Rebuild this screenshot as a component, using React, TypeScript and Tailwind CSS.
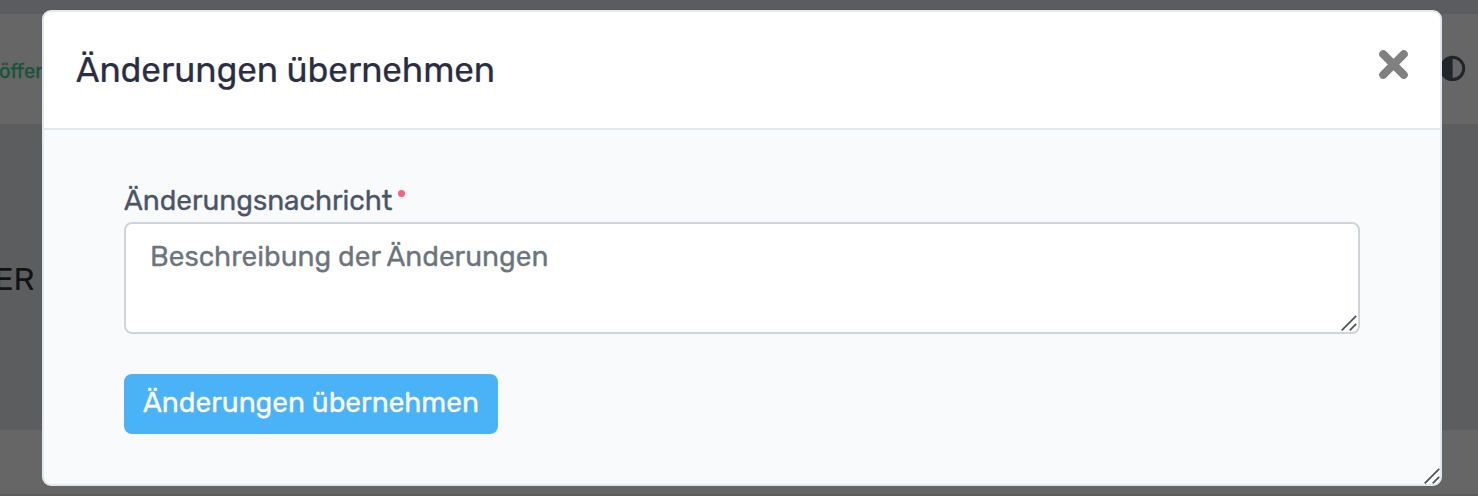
function ResizeGrip({ className }: { className: string }) {
  return (
    <svg className={className} width="16" height="16" viewBox="0 0 16 16" fill="none" stroke="#505050" strokeWidth="1.7">
      <path d="M0.7 15.3 15.2 0.8M8.7 15.3 15.2 8.8" />
    </svg>
  );
}

function Backdrop() {
  return (
    <div className="flex h-full flex-col">
      <div className="h-[14px] bg-[#5b5c60]" />
      <div className="flex h-[110px] justify-between bg-[#666666]">
        <div className="-ml-[1px] pt-[42px] text-[20px] leading-[30px] text-[#16543a] [-webkit-text-stroke:0.3px]">öffen</div>
        <svg className="mt-[41px] mr-[12px]" width="27" height="27" viewBox="0 0 27 27">
          <circle cx="13.5" cy="13.4" r="11.2" fill="none" stroke="#20252c" strokeWidth="3" />
          <path d="M13.6 2a11.4 11.4 0 0 0 0 22.8Z" fill="#20252c" />
        </svg>
      </div>
      <div className="h-[306px] bg-[#5c5d5f] pt-[132px]">
        <div className="-ml-[6px] text-[32px] leading-[46px] text-[#111214]">ER</div>
      </div>
      <div className="h-[64px] bg-[#666666]" />
      <div className="h-[2px] bg-[#5c5c5e]" />
    </div>
  );
}

export default function App() {
  return (
    <div className="relative h-[496px] w-[1478px] overflow-hidden font-['Rubik','Roboto',sans-serif]">
      <Backdrop />
      <div className="absolute top-[10px] left-[42px] flex h-[476px] w-[1400px] flex-col overflow-hidden rounded-[9px] border-2 border-[#e2e8f0] bg-[#f9fafc]">
        <header className="flex h-[118px] shrink-0 items-start justify-between border-b-2 border-[#e2e8f0] bg-white pr-[31px] pl-[32px]">
          <h1 className="pt-[34px] text-[35px] leading-[48px] tracking-[-0.04px] whitespace-nowrap text-[#2a2e45] [-webkit-text-stroke:0.2px]">Änderungen übernehmen</h1>
          <button aria-label="Schließen" className="pt-[37px]">
            <svg width="31" height="31" viewBox="0 0 31 31" stroke="#808080" strokeWidth="8" strokeLinecap="round">
              <path d="M5.2 5.2 25.8 25.8M25.8 5.2 5.2 25.8" />
            </svg>
          </button>
        </header>
        <form className="flex flex-col items-start px-[80px] pt-[54px]">
          <label className="flex h-[38px] text-[28px] leading-[34px] text-[#4b5568]">
            <span className="tracking-[-0.04px] [-webkit-text-stroke:0.3px]">Änderungsnachricht</span>
            <span className="mt-[6px] ml-[6px] size-[7px] rounded-full bg-[#f5627d]" />
          </label>
          <div className="relative h-[112px] w-full">
            <textarea
              className="block h-full w-full resize-none rounded-[8px] border-2 border-[#ced4da] bg-white px-[24px] pt-[14px] text-[28px] leading-[38px] [-webkit-text-stroke:0.3px] placeholder:text-[#6c757d] placeholder:opacity-100"
              placeholder="Beschreibung der Änderungen"
            />
            <ResizeGrip className="absolute right-[3px] bottom-[3px]" />
          </div>
          <button type="button" className="mt-[40px] h-[60px] w-[374px] rounded-[8px] bg-[#4ab2f6] pb-[2px] text-[28px] leading-[40px] whitespace-nowrap text-white [-webkit-text-stroke:0.3px]">
            Änderungen übernehmen
          </button>
        </form>
        <ResizeGrip className="absolute right-0 bottom-0" />
      </div>
    </div>
  );
}
